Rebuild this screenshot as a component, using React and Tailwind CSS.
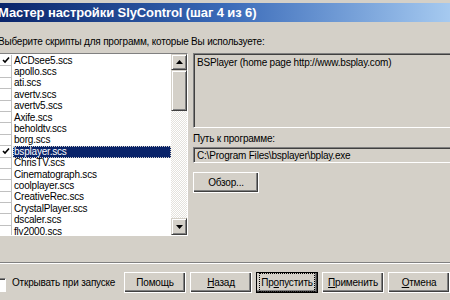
import React from 'react';

const scripts = [
  { name: 'ACDsee5.scs', checked: true },
  { name: 'apollo.scs' },
  { name: 'ati.scs' },
  { name: 'avertv.scs' },
  { name: 'avertv5.scs' },
  { name: 'Axife.scs' },
  { name: 'beholdtv.scs' },
  { name: 'borg.scs' },
  { name: 'bsplayer.scs', checked: true, selected: true },
  { name: 'ChrisTV.scs' },
  { name: 'Cinematograph.scs' },
  { name: 'coolplayer.scs' },
  { name: 'CreativeRec.scs' },
  { name: 'CrystalPlayer.scs' },
  { name: 'dscaler.scs' },
  { name: 'fly2000.scs' },
];

function Check() {
  return (
    <svg width="8" height="8" viewBox="0 0 8 8">
      <path d="M1 4 L3 6 L7 1.5" stroke="#000" strokeWidth="1.6" fill="none" />
    </svg>
  );
}

function Btn({ children, isDefault, className = '' }) {
  return (
    <div
      className={`h-[21px] w-[62px] shrink-0 flex items-center justify-center bg-[#d4d0c8] border ${
        isDefault ? 'border-black' : 'border-[#fff]'
      } shadow-[inset_-1px_-1px_0_#404040,inset_-2px_-2px_0_#808080] ${className}`}
    >
      {children}
    </div>
  );
}

export default function App() {
  return (
    <div
      className="w-[450px] h-[300px] overflow-hidden bg-[#d4d0c8] text-[10px] text-black tracking-[-0.2px]"
      style={{ fontFamily: '"Liberation Sans", Arial, sans-serif' }}
    >
      {/* title bar */}
      <div className="h-[3px] bg-[#d4d0c8]" />
      <div className="h-[19px] bg-gradient-to-r from-[#0a246a] via-[#3a6ab8] to-[#a6caf0] flex items-center">
        <span className="-ml-[2px] text-white font-bold text-[13px] tracking-[-0.1px]">
          Мастер настройки SlyControl (шаг 4 из 6)
        </span>
      </div>

      <div className="mt-[14px] -ml-[2px] leading-[12px]">Выберите скрипты для программ, которые Вы используете:</div>

      <div className="flex mt-[5px]">
        {/* list */}
        <div className="w-[189px] h-[183px] shrink-0 -ml-[1px] border border-[#808080] border-b-[#fff] border-r-[#fff] flex bg-white overflow-hidden">
          <div className="flex-1 overflow-hidden pt-[1px]">
            {scripts.map((s) => (
              <div key={s.name} className="h-[11.4px] flex items-center">
                <div className="w-[12px] h-[11.4px] shrink-0 border-r border-b border-[#c0c0c0] flex items-center justify-center">
                  {s.checked && <Check />}
                </div>
                <div
                  className={`ml-[1px] h-[11.4px] flex items-center pl-[1px] leading-none ${
                    s.selected ? 'bg-[#0a246a] text-white flex-1 outline outline-1 outline-dotted outline-[#d4d0c8] -outline-offset-1' : ''
                  }`}
                >
                  {s.name}
                </div>
              </div>
            ))}
          </div>
          {/* scrollbar */}
          <div className="w-[16px] shrink-0 flex flex-col bg-[repeating-conic-gradient(#fff_0_25%,#e4e2dc_0_50%)] bg-[length:2px_2px]">
            <div className="h-[16px] bg-[#d4d0c8] border border-[#d4d0c8] border-r-[#404040] border-b-[#404040] shadow-[inset_1px_1px_0_#fff,inset_-1px_-1px_0_#808080] flex items-center justify-center">
              <svg width="7" height="4" viewBox="0 0 7 4"><path d="M3.5 0 L7 4 L0 4 Z" fill="#000" /></svg>
            </div>
            <div className="h-[41px] bg-[#d4d0c8] border border-[#d4d0c8] border-r-[#404040] border-b-[#404040] shadow-[inset_1px_1px_0_#fff,inset_-1px_-1px_0_#808080]" />
            <div className="flex-1" />
            <div className="h-[17px] bg-[#d4d0c8] border border-[#d4d0c8] border-r-[#404040] border-b-[#404040] shadow-[inset_1px_1px_0_#fff,inset_-1px_-1px_0_#808080] flex items-center justify-center">
              <svg width="7" height="4" viewBox="0 0 7 4"><path d="M0 0 L7 0 L3.5 4 Z" fill="#000" /></svg>
            </div>
          </div>
        </div>

        {/* right panel */}
        <div className="ml-[5px] flex-1 flex flex-col min-w-0">
          <div className="h-[75px] -mr-[4px] border border-[#808080] border-b-[#fff] border-r-[#fff] shadow-[inset_1px_1px_0_#404040] pl-[3px] pt-[3px] leading-[12px]">
            BSPlayer (home page http://www.bsplay.com)
          </div>
          <div className="mt-[5px] leading-[12px]">Путь к программе:</div>
          <div className="mt-[2px] h-[16px] -mr-[4px] border border-[#808080] border-b-[#fff] border-r-[#fff] shadow-[inset_1px_1px_0_#404040] pl-[3px] flex items-center">
            C:\Program Files\bsplayer\bplay.exe
          </div>
          <Btn className="mt-[9px] w-[66px]">Обзор...</Btn>
        </div>
      </div>

      {/* separator */}
      <div className="mt-[26px] h-[2px] border-t border-[#808080] border-b border-b-[#fff]" />

      {/* bottom bar */}
      <div className="mt-[8px] flex items-center">
        <div className="w-[13px] h-[14px] -ml-[5px] bg-white border border-[#808080] border-b-[#fff] border-r-[#fff] shadow-[inset_1px_1px_0_#404040] mt-[4px]" />
        <span className="ml-[6px] w-[112px] shrink-0">Открывать при запуске</span>
        <div className="flex gap-[4px]">
          <Btn>Помощь</Btn>
          <Btn><span><u>Н</u>азад</span></Btn>
          <Btn isDefault><span className="outline outline-1 outline-dotted outline-black outline-offset-1">Пр<u>о</u>пустить</span></Btn>
          <Btn><span><u>П</u>рименить</span></Btn>
          <Btn><span><u>О</u>тмена</span></Btn>
        </div>
      </div>
    </div>
  );
}
